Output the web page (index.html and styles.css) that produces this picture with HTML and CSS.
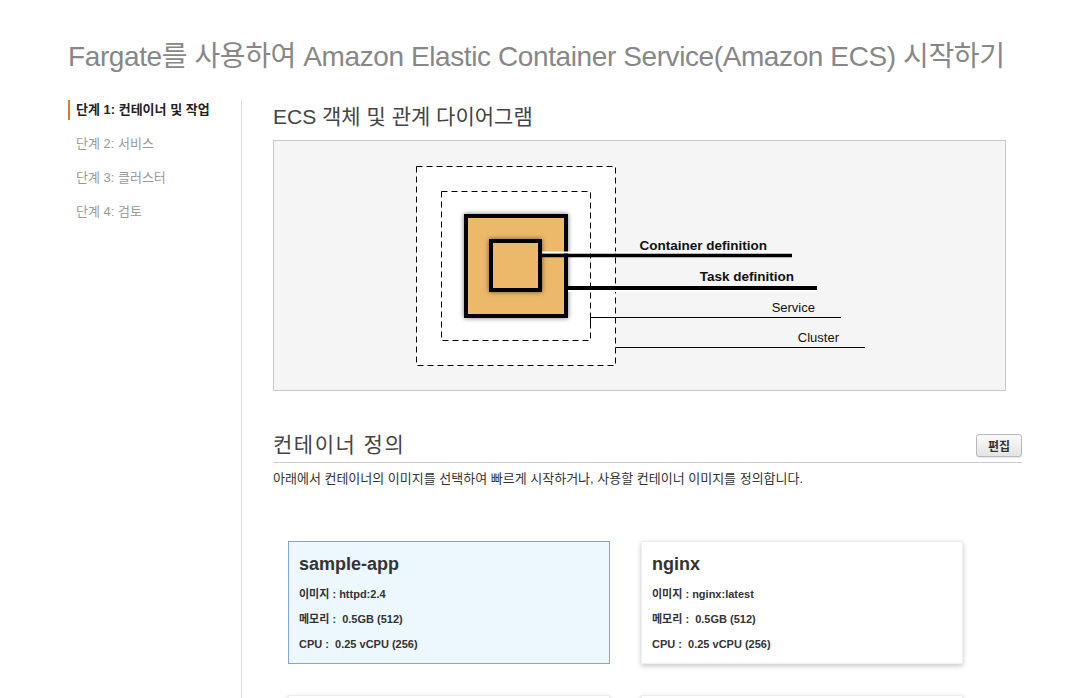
FILE: index.html
```html
<!DOCTYPE html>
<html lang="ko">
<head>
    <meta charset="UTF-8">
    <title>Fargate 시작하기</title>
    <link rel="stylesheet" href="styles.css">
</head>
<body>
    <div class="page">
        <h1 class="page-title">Fargate를 사용하여 Amazon Elastic Container Service(Amazon ECS) 시작하기</h1>

        <div class="layout">
            <!-- Steps -->
            <ul class="steps">
                <li class="step active">단계 1: 컨테이너 및 작업</li>
                <li class="step">단계 2: 서비스</li>
                <li class="step">단계 3: 클러스터</li>
                <li class="step">단계 4: 검토</li>
            </ul>

            <div class="main">
                <h2 class="section-title">ECS 객체 및 관계 다이어그램</h2>
                <div class="diagram">
                    <svg width="731" height="249" viewBox="0 0 731 249">
                        <defs>
                            <filter id="glow" x="-30%" y="-30%" width="160%" height="160%">
                                <feDropShadow dx="0" dy="0" stdDeviation="2.5" flood-color="#000" flood-opacity="0.55"/>
                            </filter>
                        </defs>
                        <rect x="142.5" y="25.5" width="199" height="199" fill="#fff" stroke="#000" stroke-dasharray="6 4"/>
                        <rect x="167.5" y="50.5" width="149" height="149" fill="#fff" stroke="#000" stroke-dasharray="6 4"/>
                        <rect x="192" y="75" width="100" height="100" fill="#ecb96a" stroke="#000" stroke-width="4" filter="url(#glow)"/>
                        <rect x="217" y="100" width="49" height="49" fill="#ecb96a" stroke="#000" stroke-width="4" filter="url(#glow)"/>

                        <line x1="268" y1="111.5" x2="518" y2="111.5" stroke="#fff" stroke-width="2"/>
                        <line x1="268" y1="114.5" x2="518" y2="114.5" stroke="#000" stroke-width="3.5"/>
                        <line x1="294" y1="147" x2="543" y2="147" stroke="#000" stroke-width="4"/>
                        <line x1="294" y1="150" x2="543" y2="150" stroke="#fff" stroke-width="2"/>
                        <line x1="316.5" y1="176.5" x2="567" y2="176.5" stroke="#000"/>
                        <line x1="316.5" y1="176.5" x2="316.5" y2="184" stroke="#000"/>
                        <line x1="341.5" y1="206.5" x2="591" y2="206.5" stroke="#000"/>

                        <text class="label bold" x="493" y="109" text-anchor="end">Container definition</text>
                        <text class="label bold" x="520" y="140" text-anchor="end">Task definition</text>
                        <text class="label" x="541" y="171" text-anchor="end">Service</text>
                        <text class="label" x="565" y="201" text-anchor="end">Cluster</text>
                    </svg>
                </div>

                <div class="section-head">
                    <h2 class="section-title wide">컨테이너 정의</h2>
                    <button class="btn">편집</button>
                </div>
                <p class="section-desc">아래에서 컨테이너의 이미지를 선택하여 빠르게 시작하거나, 사용할 컨테이너 이미지를 정의합니다.</p>

                <div class="cards">
                    <div class="card selected">
                        <h3>sample-app</h3>
                        <p>이미지 : httpd:2.4</p>
                        <p>메모리 : &nbsp;0.5GB (512)</p>
                        <p>CPU : &nbsp;0.25 vCPU (256)</p>
                    </div>
                    <div class="card">
                        <h3>nginx</h3>
                        <p>이미지 : nginx:latest</p>
                        <p>메모리 : &nbsp;0.5GB (512)</p>
                        <p>CPU : &nbsp;0.25 vCPU (256)</p>
                    </div>
                    <div class="card"></div>
                    <div class="card"></div>
                </div>
            </div>
        </div>
    </div>
</body>
</html>
```

FILE: styles.css
```css
/* Global */
body {
    margin: 0;
    font-family: "Liberation Sans", "Noto Sans CJK KR", sans-serif;
    color: #333;
    background: #fff;
    overflow: hidden;
}

.page {
    padding: 37px 0 0 68px;
}

.page-title {
    margin: 0 0 23px;
    font-size: 28px;
    font-weight: 400;
    line-height: 40px;
    color: #878787;
    letter-spacing: -0.4px;
}

.layout {
    display: flex;
}

/* Steps */
.steps {
    list-style: none;
    margin: 0;
    padding: 0;
    width: 173px;
    min-height: 600px;
    border-right: 1px solid #ddd;
}

.step {
    padding-left: 8px;
    height: 20px;
    line-height: 20px;
    margin-bottom: 14px;
    font-size: 13px;
    color: #999;
}

.step.active {
    padding-left: 6px;
    border-left: 2px solid #e07b1e;
    font-weight: 700;
    color: #222;
}

/* Main */
.main {
    width: 749px;
    padding: 4px 0 0 31px;
}

.section-title {
    margin: 0;
    font-size: 21px;
    font-weight: 400;
    line-height: 26px;
    color: #444;
}

.section-title.wide {
    letter-spacing: 1.5px;
}

.diagram {
    width: 731px;
    height: 249px;
    margin-top: 10px;
    border: 1px solid #c8c8c8;
    background: #f5f5f5;
}

.diagram svg {
    display: block;
}

.label {
    font-family: "Liberation Sans", sans-serif;
    font-size: 13px;
    fill: #111;
}

.label.bold {
    font-weight: 700;
    font-size: 13.5px;
}

.section-head {
    display: flex;
    justify-content: space-between;
    align-items: center;
    margin-top: 41px;
    padding-bottom: 4px;
    border-bottom: 1px solid #ccc;
}

.btn {
    height: 23px;
    padding: 0 11px;
    font-family: "Liberation Sans", "Noto Sans CJK KR", sans-serif;
    font-size: 12px;
    font-weight: 700;
    color: #333;
    background: linear-gradient(#fafafa, #e4e4e4);
    border: 1px solid #b8b8b8;
    border-radius: 3px;
    box-shadow: 0 1px 1px rgba(0, 0, 0, 0.1);
}

.section-desc {
    margin: 7px 0 0;
    font-size: 13px;
    line-height: 18px;
    color: #333;
}

/* Cards */
.cards {
    display: grid;
    grid-template-columns: 322px 322px;
    column-gap: 31px;
    row-gap: 31px;
    margin-top: 53px;
    padding-left: 15px;
}

.card {
    height: 123px;
    padding: 10px 10px 0;
    box-sizing: border-box;
    background: #fff;
    border: 1px solid #eee;
    box-shadow: 0 2px 5px rgba(0, 0, 0, 0.22);
}

.card.selected {
    background: #edf7fe;
    border-color: #7ba8d9;
    box-shadow: none;
}

.card h3 {
    margin: 0 0 6px;
    font-size: 18px;
    line-height: 24px;
    color: #333;
}

.card p {
    margin: 0;
    font-size: 11px;
    font-weight: 700;
    line-height: 25px;
    color: #333;
}
```
